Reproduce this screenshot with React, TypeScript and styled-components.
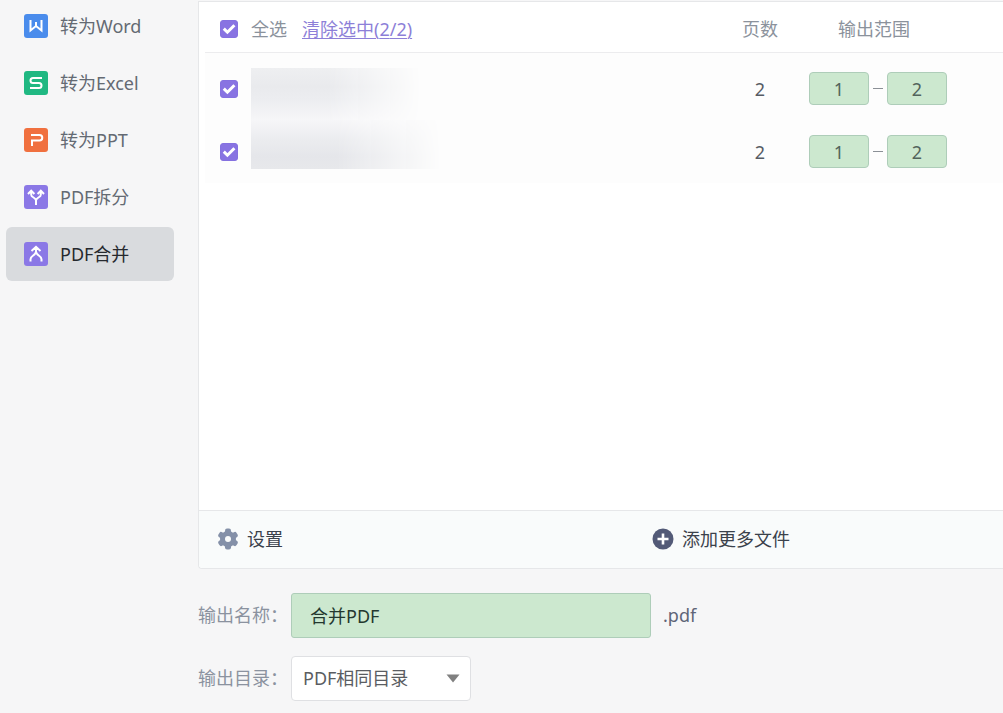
import React, { useState } from "react";
import styled, { createGlobalStyle } from "styled-components";

const GlobalStyle = createGlobalStyle`
  * { box-sizing: border-box; }
  body {
    margin: 0;
    background: #f6f6f7;
    color: #565c64;
    font: 390 18px/24px "Noto Sans", "Noto Sans CJK SC", sans-serif;
  }
  button, input, select { font: inherit; color: inherit; margin: 0; }
`;

const Page = styled.div`
  display: grid;
  grid-template-columns: 198px minmax(0, 1fr);
  min-height: 100vh;
`;

const Sidebar = styled.nav`
  display: flex;
  flex-direction: column;
  gap: 3px;
  margin-top: -1px;
  padding: 0 24px 0 6px;
`;

const NavButton = styled.button<{ $active?: boolean }>`
  display: flex;
  align-items: center;
  gap: 12px;
  height: 54px;
  padding: 0 18px;
  border: 0;
  border-radius: 6px;
  text-align: left;
  white-space: nowrap;
  background: ${(p) => (p.$active ? "#d9dbde" : "transparent")};
  color: ${(p) => (p.$active ? "#26292e" : "#646a73")};
`;

const NavIcon = styled.svg`
  width: 24px;
  height: 24px;
  flex: none;
  fill: none;
  stroke: #fff;
  stroke-width: 2;
`;

const Main = styled.main`
  display: flex;
  flex-direction: column;
  padding-top: 1px;
`;

const Panel = styled.section`
  flex: 1;
  display: flex;
  flex-direction: column;
  border: solid #e6e7e9;
  border-width: 1px 0 1px 1px;
  border-bottom-left-radius: 4px;
  background: #fff;
`;

const ListArea = styled.div`
  flex: 1;
  padding-left: 6px;
`;

const FileTable = styled.table`
  width: 100%;
  table-layout: fixed;
  border-collapse: separate;
  border-spacing: 0;
  background: #fdfdfd;

  tbody::before {
    content: "";
    display: block;
    height: 4px;
  }
`;

const HeadCell = styled.th<{ $width?: number; $align?: string; $indent?: number }>`
  width: ${(p) => (p.$width ? `${p.$width}px` : "auto")};
  height: 51px;
  padding: 3px 0 0 ${(p) => p.$indent ?? 0}px;
  border-bottom: 1px solid #ececee;
  background: #fff;
  color: #8b929c;
  font-weight: inherit;
  text-align: ${(p) => p.$align ?? "left"};
`;

const Cell = styled.td<{ $align?: string; $indent?: number; $top?: boolean }>`
  height: 63px;
  padding: 0 0 0 ${(p) => p.$indent ?? 0}px;
  text-align: ${(p) => p.$align ?? "left"};
  vertical-align: ${(p) => (p.$top ? "top" : "middle")};
`;

const HeadActions = styled.div`
  display: flex;
  align-items: center;
  gap: 15px;
`;

const ClearLink = styled.a`
  color: #8d7fd8;
  text-decoration: underline;
  text-underline-offset: 2px;
  text-decoration-thickness: 1px;
`;

const CheckWrap = styled.span`
  display: grid;
  width: 18px;
  height: 18px;

  > * { grid-area: 1 / 1; }
  svg { pointer-events: none; fill: none; stroke: #fff; stroke-width: 3; }
`;

const CheckInput = styled.input`
  appearance: none;
  width: 18px;
  height: 18px;
  border: 1px solid #8571e0;
  border-radius: 3px;
  background: #fff;

  &:checked { background: #8873e2; }
`;

const HiddenName = styled.div<{ $first?: boolean }>`
  width: ${(p) => (p.$first ? 170 : 190)}px;
  height: ${(p) => (p.$first ? 52 : 49)}px;
  margin-top: ${(p) => (p.$first ? 11 : 0)}px;
  background: ${(p) =>
    p.$first
      ? "linear-gradient(#eeeff1, #e9eaed 36%, #ecedf0 60%, #f6f6f8)"
      : "linear-gradient(#f6f6f8, #ebecef 40%, #e5e6ea 75%, #e7e8eb)"};
  mask-image: linear-gradient(90deg, #000 45%, transparent);
`;

const Range = styled.div`
  display: flex;
  align-items: center;
  gap: 4px;
`;

const Dash = styled.span`
  width: 10px;
  height: 1px;
  background: #8b9096;
`;

const PageInput = styled.input`
  width: 60px;
  height: 33px;
  padding: 0;
  border: 1px solid #aecdb9;
  border-radius: 4px;
  background: #cce8cf;
  color: #52645c;
  text-align: center;
`;

const PanelFooter = styled.footer`
  display: flex;
  align-items: center;
  justify-content: space-between;
  height: 58px;
  padding: 0 213px 2px 18px;
  border-top: 1px solid #e6e7e9;
  border-bottom-left-radius: 4px;
  background: #f9fbfb;
`;

const FooterButton = styled.button`
  display: flex;
  align-items: center;
  gap: 8px;
  padding: 0;
  border: 0;
  background: none;
  color: #3b414b;
`;

const FooterIcon = styled.svg`
  width: 22px;
  height: 22px;
`;

const OutputForm = styled.form`
  display: flex;
  flex-direction: column;
  gap: 18px;
  padding: 24px 0 12px;
`;

const FormRow = styled.div`
  display: flex;
  align-items: center;
  height: 45px;
`;

const FormLabel = styled.label`
  width: 93px;
  padding-bottom: 2px;
  color: #8b929f;
`;

const NameInput = styled.input`
  width: 360px;
  height: 45px;
  padding: 0 18px 2px;
  border: 1px solid #aecdb9;
  border-radius: 3px;
  background: #cce8cf;
  color: #24382f;
`;

const Suffix = styled.span`
  margin-left: 12px;
  padding-bottom: 2px;
  color: #5f6577;
`;

const SelectWrap = styled.div`
  display: grid;
  width: 180px;
  align-items: center;

  > * { grid-area: 1 / 1; }
  svg { justify-self: end; margin-right: 11px; pointer-events: none; fill: #808080; }
`;

const DirSelect = styled.select`
  appearance: none;
  width: 100%;
  height: 45px;
  padding: 0 30px 2px 11px;
  border: 1px solid #dfe0e3;
  border-radius: 4px;
  background: #fff;
  color: #5a5d62;
`;

const navItems = [
  { label: "转为Word", fill: "#4a8cec", mark: <path d="M6.5 6v10.5l5.5-4.5 5.5 4.5V6M12 8v4" /> },
  { label: "转为Excel", fill: "#20b882", mark: <path d="M18 7H9a2.5 2.5 0 0 0 0 5h6a2.5 2.5 0 0 1 0 5H6" /> },
  { label: "转为PPT", fill: "#f0703f", mark: <path d="M7 7h8.5a2.75 2.75 0 0 1 0 5.5H8V18" /> },
  {
    label: "PDF拆分",
    fill: "#8b78e6",
    mark: (
      <path d="M12 20v-5M7.2 6.5v3.2c0 2.8 4.8 2.8 4.8 5.8 0-3 4.8-3 4.8-5.8V6.5M4 9l3.2-3.4L10.4 9M13.6 9l3.2-3.4L20 9" />
    ),
  },
  {
    label: "PDF合并",
    fill: "#8b78e6",
    mark: <path d="M12 5v5M7.5 9L12 4.8 16.5 9M6.5 19.5v-2.3c0-3.7 5.5-3.7 5.5-7.7 0 4 5.5 4 5.5 7.7v2.3" />,
  },
];

function Checkbox({
  id,
  label,
  checked,
  onChange,
}: {
  id: string;
  label: string;
  checked: boolean;
  onChange: (v: boolean) => void;
}) {
  return (
    <CheckWrap>
      <CheckInput
        id={id}
        type="checkbox"
        aria-label={label}
        checked={checked}
        onChange={(e) => onChange(e.target.checked)}
      />
      {checked && (
        <svg viewBox="0 0 18 18" aria-hidden="true">
          <path d="M3.8 8.6l3.6 3.6 7-7" />
        </svg>
      )}
    </CheckWrap>
  );
}

export default function App() {
  const [active, setActive] = useState(4);
  const [checked, setChecked] = useState([true, true]);

  return (
    <>
      <GlobalStyle />
      <Page>
        <Sidebar>
          {navItems.map((item, i) => (
            <NavButton key={item.label} type="button" $active={i === active} onClick={() => setActive(i)}>
              <NavIcon viewBox="0 0 24 24" aria-hidden="true">
                <rect width="24" height="24" rx="3" fill={item.fill} stroke="none" />
                {item.mark}
              </NavIcon>
              {item.label}
            </NavButton>
          ))}
        </Sidebar>
        <Main>
          <Panel>
            <ListArea>
              <FileTable>
                <thead>
                  <tr>
                    <HeadCell $width={46} $indent={15}>
                      <Checkbox
                        id="all"
                        label="全选"
                        checked={checked.every(Boolean)}
                        onChange={(v) => setChecked([v, v])}
                      />
                    </HeadCell>
                    <HeadCell>
                      <HeadActions>
                        <label htmlFor="all">全选</label>
                        <ClearLink href="#clear" onClick={() => setChecked([false, false])}>
                          清除选中({checked.filter(Boolean).length}/2)
                        </ClearLink>
                      </HeadActions>
                    </HeadCell>
                    <HeadCell $width={88} $align="center">页数</HeadCell>
                    <HeadCell $width={199} $indent={34}>输出范围</HeadCell>
                  </tr>
                </thead>
                <tbody>
                  {checked.map((on, i) => (
                    <tr key={i}>
                      <Cell $indent={15}>
                        <Checkbox
                          id={`file-${i + 1}`}
                          label={`文件${i + 1}`}
                          checked={on}
                          onChange={(v) => setChecked(checked.map((c, j) => (j === i ? v : c)))}
                        />
                      </Cell>
                      <Cell $top>
                        <HiddenName $first={i === 0} />
                      </Cell>
                      <Cell $align="center">2</Cell>
                      <Cell $indent={5}>
                        <Range>
                          <PageInput aria-label="起始页" defaultValue="1" />
                          <Dash />
                          <PageInput aria-label="结束页" defaultValue="2" />
                        </Range>
                      </Cell>
                    </tr>
                  ))}
                </tbody>
              </FileTable>
            </ListArea>
            <PanelFooter>
              <FooterButton type="button">
                <FooterIcon viewBox="0 0 22 22" aria-hidden="true">
                  <g fill="#8490a8">
                    <circle cx="11" cy="11" r="8" />
                    {[0, 60, 120].map((a) => (
                      <rect key={a} x="8" y="0.5" width="6" height="21" rx="2" transform={`rotate(${a} 11 11)`} />
                    ))}
                  </g>
                  <circle cx="11" cy="11" r="3" fill="#f9fbfb" />
                </FooterIcon>
                设置
              </FooterButton>
              <FooterButton type="button">
                <FooterIcon viewBox="0 0 22 22" aria-hidden="true">
                  <circle cx="11" cy="11" r="10.5" fill="#535a77" />
                  <path d="M11 5.5v11M5.5 11h11" stroke="#fff" strokeWidth="2.6" />
                </FooterIcon>
                添加更多文件
              </FooterButton>
            </PanelFooter>
          </Panel>
          <OutputForm>
            <FormRow>
              <FormLabel htmlFor="name">输出名称：</FormLabel>
              <NameInput id="name" defaultValue="合并PDF" />
              <Suffix>.pdf</Suffix>
            </FormRow>
            <FormRow>
              <FormLabel htmlFor="dir">输出目录：</FormLabel>
              <SelectWrap>
                <DirSelect id="dir">
                  <option>PDF相同目录</option>
                </DirSelect>
                <svg width="14" height="9" viewBox="0 0 14 9" aria-hidden="true">
                  <path d="M0.5 0.5h13L7 8.5z" />
                </svg>
              </SelectWrap>
            </FormRow>
          </OutputForm>
        </Main>
      </Page>
    </>
  );
}
